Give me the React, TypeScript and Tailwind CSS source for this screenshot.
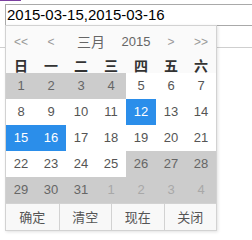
import React from "react";

type Cell = { d: number; bg: "gray" | "white" | "blue"; dim?: boolean };

const rows: Cell[][] = [
  [
    { d: 1, bg: "gray" },
    { d: 2, bg: "gray" },
    { d: 3, bg: "gray" },
    { d: 4, bg: "gray" },
    { d: 5, bg: "white" },
    { d: 6, bg: "white" },
    { d: 7, bg: "white" },
  ],
  [
    { d: 8, bg: "white" },
    { d: 9, bg: "white" },
    { d: 10, bg: "white" },
    { d: 11, bg: "white" },
    { d: 12, bg: "blue" },
    { d: 13, bg: "white" },
    { d: 14, bg: "white" },
  ],
  [
    { d: 15, bg: "blue" },
    { d: 16, bg: "blue" },
    { d: 17, bg: "white" },
    { d: 18, bg: "white" },
    { d: 19, bg: "white" },
    { d: 20, bg: "white" },
    { d: 21, bg: "white" },
  ],
  [
    { d: 22, bg: "white" },
    { d: 23, bg: "white" },
    { d: 24, bg: "white" },
    { d: 25, bg: "white" },
    { d: 26, bg: "gray" },
    { d: 27, bg: "gray" },
    { d: 28, bg: "gray" },
  ],
  [
    { d: 29, bg: "gray" },
    { d: 30, bg: "gray" },
    { d: 31, bg: "gray" },
    { d: 1, bg: "gray", dim: true },
    { d: 2, bg: "gray", dim: true },
    { d: 3, bg: "gray", dim: true },
    { d: 4, bg: "gray", dim: true },
  ],
];

const weekdays = ["日", "一", "二", "三", "四", "五", "六"];
const buttons = ["确定", "清空", "现在", "关闭"];

const cellClass = (c: Cell) => {
  if (c.bg === "blue") return "bg-[#2b8eea] text-white";
  if (c.bg === "gray") return c.dim ? "bg-[#cccccc] text-[#a8a8a8]" : "bg-[#cccccc] text-[#666]";
  return "bg-white text-[#555]";
};

export default function App() {
  return (
    <div className="relative w-[252px] h-[240px] bg-white overflow-hidden font-['Liberation_Sans','Noto_Sans_CJK_SC',sans-serif]">
      <div className="w-[21px] h-[1px] bg-[#7b3fa0]" />
      <div className="ml-[5px] mt-[3px] w-[260px] h-[22px] border border-[#a9a9a9] flex items-center pl-[1px] text-[15px] text-black">
        2015-03-15,2015-03-16
      </div>
      <div className="mt-[21px] border-t border-[#cfcfcf]" />

      <div className="absolute top-[25px] left-[5px] w-[212px] border border-[#d2d2d2] bg-[#fafafa] shadow-[1px_1px_3px_rgba(0,0,0,0.12)]">
        <div className="h-[31px] grid grid-cols-7 items-center text-center text-[12px] text-[#999]">
          <span>&lt;&lt;</span>
          <span>&lt;</span>
          <span className="col-span-3 grid grid-cols-[50px_40px] items-center text-[#666]">
            <span className="text-[14px] font-['Noto_Sans_CJK_SC',sans-serif]">三月</span>
            <span className="text-[13px]">2015</span>
          </span>
          <span>&gt;</span>
          <span>&gt;&gt;</span>
        </div>
        <div className="h-[16px] grid grid-cols-7 items-center text-center text-[14px] font-bold text-[#333] font-['Noto_Sans_CJK_SC',sans-serif]">
          {weekdays.map((w) => (
            <span key={w} className="leading-[16px]">{w}</span>
          ))}
        </div>
        <div className="grid grid-cols-7">
          {rows.flat().map((c, i) => (
            <div
              key={i}
              className={`h-[26px] flex items-center justify-center text-[13px] ${cellClass(c)}`}
            >
              {c.d}
            </div>
          ))}
        </div>
        <div className="grid grid-cols-4 h-[27px] border-t border-[#d2d2d2] bg-[#f8f8f8]">
          {buttons.map((b, i) => (
            <div
              key={b}
              className={`flex items-center justify-center text-[13px] text-[#555] font-['Noto_Sans_CJK_SC',sans-serif] ${i > 0 ? "border-l border-[#d2d2d2]" : ""}`}
            >
              {b}
            </div>
          ))}
        </div>
      </div>
    </div>
  );
}
